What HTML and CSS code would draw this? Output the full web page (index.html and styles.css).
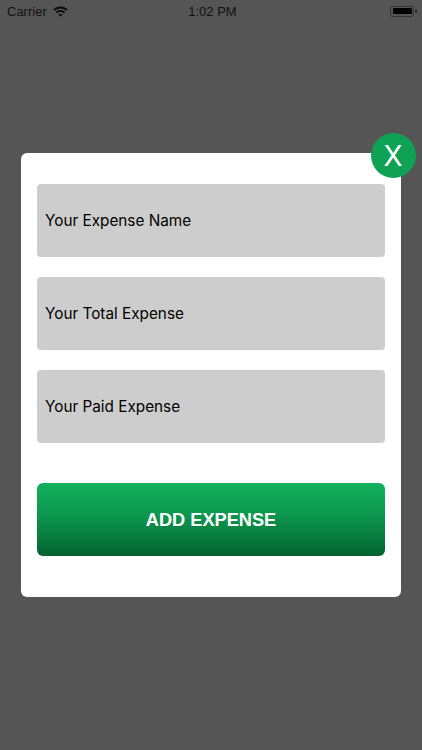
FILE: index.html
```html
<!DOCTYPE html>
<html lang="en">
<head>
    <meta charset="UTF-8">
    <meta name="viewport" content="width=device-width, initial-scale=1.0">
    <title>Add Expense</title>
    <link rel="stylesheet" href="styles.css">
</head>
<body>

    <div class="status-bar">
        <div class="status-left">
            <span>Carrier</span>
            <svg class="wifi" width="15" height="11" viewBox="0 0 15 11">
                <path d="M7.5 0.4C4.7 0.4 2.2 1.5 0.3 3.3L1.7 4.8C3.2 3.3 5.2 2.4 7.5 2.4S11.800 3.300 13.300 4.800L14.700 3.300C12.800 1.500 10.300 0.400 7.500 0.400Z"/>
                <path d="M7.500 4.100C5.700 4.100 4.100 4.800 2.900 6L4.300 7.400C5.100 6.600 6.200 6.100 7.500 6.100S9.900 6.600 10.700 7.400L12.100 6C10.900 4.800 9.300 4.100 7.500 4.100Z"/>
                <path d="M7.500 7.700C6.700 7.700 6 8 5.500 8.600L7.500 10.700L9.500 8.600C9 8 8.300 7.700 7.500 7.700Z"/>
            </svg>
        </div>
        <div class="status-time">1:02 PM</div>
        <div class="battery">
            <div class="battery-body"><div class="battery-fill"></div></div>
            <div class="battery-tip"></div>
        </div>
    </div>

    <div class="overlay">
        <div class="card">
            <button class="close-button">X</button>
            <div class="field">Your Expense Name</div>
            <div class="field">Your Total Expense</div>
            <div class="field">Your Paid Expense</div>
            <button class="add-button">ADD EXPENSE</button>
        </div>
    </div>

</body>
</html>
```

FILE: styles.css
```css
html, body {
    margin: 0;
    height: 100%;
}
body {
    position: relative;
    background-color: #555555;
    font-family: "Inter", "Liberation Sans", sans-serif;
    overflow: hidden;
}
.status-bar {
    position: absolute;
    top: 0;
    left: 0;
    right: 0;
    height: 22px;
    display: flex;
    align-items: center;
    justify-content: space-between;
    padding: 0 3px 0 7px;
    font-family: "Liberation Sans", sans-serif;
    font-size: 13px;
    color: #111111;
}
.status-left {
    display: flex;
    align-items: center;
    gap: 6px;
    width: 120px;
}
.wifi {
    fill: #0c0c0c;
}
.status-time {
    font-size: 13px;
    margin-left: 1px;
}
.battery {
    width: 120px;
    display: flex;
    align-items: center;
    justify-content: flex-end;
    gap: 1px;
    margin-right: 2px;
}
.battery-body {
    width: 24px;
    height: 11px;
    padding: 1.500px;
    border: 1px solid #333333;
    border-radius: 3px;
    box-sizing: border-box;
}
.battery-fill {
    height: 100%;
    background-color: #000000;
    border-radius: 1px;
}
.battery-tip {
    width: 1.500px;
    height: 4px;
    background-color: #333333;
}
.overlay {
    height: 100%;
    display: flex;
    align-items: center;
    justify-content: center;
}
.card {
    position: relative;
    width: 380px;
    box-sizing: border-box;
    padding: 31px 16px 41px;
    display: flex;
    flex-direction: column;
    gap: 20px;
    background-color: white;
    border-radius: 6px;
}
.field {
    height: 73px;
    box-sizing: border-box;
    padding: 0 8px;
    display: flex;
    align-items: center;
    background-color: #cdcdcd;
    border-radius: 4px;
    font-size: 15.300px;
    color: #000000;
}
.add-button {
    height: 73px;
    margin-top: 20px;
    padding: 2px 0 0;
    border: none;
    border-radius: 6px;
    background: linear-gradient(to bottom, #12b05c 0%, #0d9a50 40%, #03632f 100%);
    color: white;
    font-family: "Liberation Sans", sans-serif;
    font-size: 18.200px;
    font-weight: bold;
}
.close-button {
    position: absolute;
    top: -20px;
    right: -15px;
    width: 45px;
    height: 45px;
    padding: 0 1px 0 0;
    border: none;
    border-radius: 50%;
    background-color: #0fa254;
    color: white;
    font-family: "Inter", sans-serif;
    font-size: 28px;
}
```
